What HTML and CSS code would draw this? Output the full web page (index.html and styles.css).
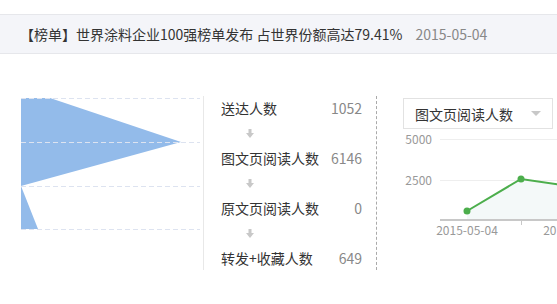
FILE: index.html
```html
<!DOCTYPE html>
<html lang="zh-CN">
<head>
  <meta charset="UTF-8">
  <title>图文统计</title>
  <link rel="stylesheet" href="styles.css">
</head>
<body>
  <div class="header">
    <span class="title">【榜单】世界涂料企业100强榜单发布 占世界份额高达79.41%</span>
    <span class="date">2015-05-04</span>
  </div>

  <div class="content">
    <!-- 漏斗图 -->
    <div class="funnel">
      <svg width="179" height="174" viewBox="0 0 179 174">
        <polygon points="0,2 29,2 160,46 0,90" fill="#93bbea"/>
        <polygon points="0,90 17,133 0,133" fill="#93bbea"/>
        <g stroke="#dde3f0" stroke-width="1" stroke-dasharray="5,3">
          <line x1="0" y1="2.5" x2="179" y2="2.5"/>
          <line x1="0" y1="46.5" x2="179" y2="46.5"/>
          <line x1="0" y1="90.5" x2="179" y2="90.5"/>
          <line x1="0" y1="133.5" x2="179" y2="133.5"/>
        </g>
      </svg>
    </div>

    <!-- 转化列表 -->
    <div class="steps">
      <div class="step"><span>送达人数</span><span class="num">1052</span></div>
      <div class="arrow"><svg width="8" height="9" viewBox="0 0 8 9"><rect x="2.5" y="0" width="3" height="4" fill="#c8c8c8"/><polygon points="0,4 8,4 4,9" fill="#c8c8c8"/></svg></div>
      <div class="step"><span>图文页阅读人数</span><span class="num">6146</span></div>
      <div class="arrow"><svg width="8" height="9" viewBox="0 0 8 9"><rect x="2.5" y="0" width="3" height="4" fill="#c8c8c8"/><polygon points="0,4 8,4 4,9" fill="#c8c8c8"/></svg></div>
      <div class="step"><span>原文页阅读人数</span><span class="num">0</span></div>
      <div class="arrow"><svg width="8" height="9" viewBox="0 0 8 9"><rect x="2.5" y="0" width="3" height="4" fill="#c8c8c8"/><polygon points="0,4 8,4 4,9" fill="#c8c8c8"/></svg></div>
      <div class="step"><span>转发+收藏人数</span><span class="num">649</span></div>
    </div>

    <!-- 趋势图 -->
    <div class="trend">
      <div class="select">
        <span>图文页阅读人数</span>
        <span class="caret"></span>
      </div>
      <svg class="chart" width="180" height="116" viewBox="0 0 180 116">
        <g fill="#999" font-size="12" text-anchor="end">
          <text x="55" y="15">5000</text>
          <text x="55" y="56">2500</text>
        </g>
        <line x1="63" y1="10.5" x2="180" y2="10.5" stroke="#eeeeee"/>
        <line x1="63" y1="51.5" x2="180" y2="51.5" stroke="#eeeeee"/>
        <polygon points="90,82 144,50 185,56 185,90 90,90" fill="#f4f9f9"/>
        <line x1="63" y1="91" x2="180" y2="91" stroke="#c8c8c8" stroke-width="2"/>
        <line x1="144.5" y1="92" x2="144.5" y2="96" stroke="#c8c8c8"/>
        <polyline points="90,82 144,50 185,56" fill="none" stroke="#4cae4c" stroke-width="2"/>
        <circle cx="90" cy="82" r="3.5" fill="#4cae4c"/>
        <circle cx="144" cy="50" r="3.5" fill="#4cae4c"/>
        <g fill="#999" font-size="12" text-anchor="middle">
          <text x="90" y="106">2015-05-04</text>
          <text x="197" y="106">2015-05-06</text>
        </g>
      </svg>
    </div>
  </div>
</body>
</html>
```

FILE: styles.css
```css
body {
  margin: 0;
  font-family: "Noto Sans CJK SC", "Noto Sans", sans-serif;
  font-size: 14px;
  color: #333;
  background: #fff;
  overflow: hidden;
}

.header {
  margin-top: 14px;
  height: 38px;
  line-height: 38px;
  padding-left: 20px;
  background: #f4f5f9;
  border-top: 1px solid #e6e7eb;
  border-bottom: 1px solid #e6e7eb;
  white-space: nowrap;
}

.header .date {
  margin-left: 10px;
  color: #888;
}

.content {
  display: flex;
  margin-top: 42px;
}

.funnel {
  width: 182px;
  padding-left: 21px;
  border-right: 1px solid #e8e8e8;
}

.funnel svg {
  display: block;
}

.steps {
  width: 141px;
  padding-left: 17px;
  padding-right: 14px;
  border-right: 1px dashed #aaa;
}

.step {
  display: flex;
  justify-content: space-between;
  height: 24px;
  line-height: 24px;
  white-space: nowrap;
}

.step .num {
  color: #888;
}

.arrow {
  height: 26px;
  padding-left: 25px;
  display: flex;
  align-items: center;
}

.arrow svg {
  display: block;
}

.trend {
  width: 180px;
  overflow: hidden;
}

.select {
  display: flex;
  justify-content: space-between;
  align-items: center;
  box-sizing: border-box;
  width: 150px;
  height: 31px;
  margin: 2px 0 0 26px;
  padding: 0 11px;
  border: 1px solid #e2e2e2;
  white-space: nowrap;
}

.caret {
  width: 0;
  height: 0;
  border-left: 5px solid transparent;
  border-right: 5px solid transparent;
  border-top: 5px solid #c8c8c8;
}

.chart {
  display: block;
}
```
